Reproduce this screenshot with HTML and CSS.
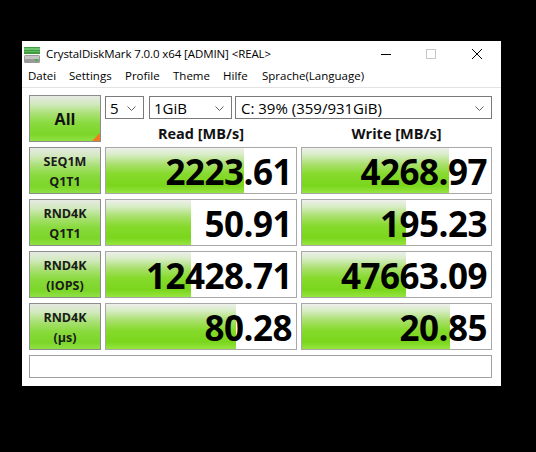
FILE: index.html
```html
<!DOCTYPE html>
<html>
<head>
<meta charset="utf-8">
<link rel="stylesheet" href="styles.css">
</head>
<body>
<div class="window">
  <div class="titlebar">
    <svg class="appicon" width="16" height="16" viewBox="0 0 16 16">
      <rect x="0" y="0" width="16" height="7" fill="#3f9c3f"/>
      <rect x="0" y="1" width="16" height="2" fill="#6cc46c"/>
      <rect x="0" y="4" width="16" height="1" fill="#5cb85c"/>
      <rect x="0" y="8" width="16" height="8" rx="1.5" fill="#9a9a9a"/>
      <rect x="1" y="9" width="14" height="3" fill="#c4c4c4"/>
      <rect x="11" y="12" width="3" height="2" fill="#4caf50"/>
    </svg>
    <span class="title">CrystalDiskMark 7.0.0 x64 [ADMIN] &lt;REAL&gt;</span>
    <div class="controls">
      <span class="ctl min"><svg width="10" height="10" viewBox="0 0 10 10"><path d="M0 5.5H10" stroke="#000" stroke-width="1"/></svg></span>
      <span class="ctl max"><svg width="10" height="10" viewBox="0 0 10 10"><rect x="0.5" y="0.5" width="9" height="9" fill="none" stroke="#c8c8c8" stroke-width="1"/></svg></span>
      <span class="ctl close"><svg width="10" height="10" viewBox="0 0 10 10"><path d="M0 0L10 10M10 0L0 10" stroke="#000" stroke-width="1"/></svg></span>
    </div>
  </div>
  <div class="menubar">
    <span class="mi m1">Datei</span>
    <span class="mi m2">Settings</span>
    <span class="mi m3">Profile</span>
    <span class="mi m4">Theme</span>
    <span class="mi m5">Hilfe</span>
    <span class="mi m6">Sprache(Language)</span>
  </div>
  <div class="content">
    <div class="btn all">All<span class="corner"></span></div>
    <div class="topright">
      <div class="combos">
        <div class="combo c1"><span>5</span><svg class="chev" width="9" height="5" viewBox="0 0 9 5"><path d="M0.5 0.5L4.5 4.5L8.5 0.5" fill="none" stroke="#606060"/></svg></div>
        <div class="combo c2"><span>1GiB</span><svg class="chev" width="9" height="5" viewBox="0 0 9 5"><path d="M0.5 0.5L4.5 4.5L8.5 0.5" fill="none" stroke="#606060"/></svg></div>
        <div class="combo c3"><span>C: 39% (359/931GiB)</span><svg class="chev" width="9" height="5" viewBox="0 0 9 5"><path d="M0.5 0.5L4.5 4.5L8.5 0.5" fill="none" stroke="#606060"/></svg></div>
      </div>
      <div class="heads">
        <div class="head">Read [MB/s]</div>
        <div class="head">Write [MB/s]</div>
      </div>
    </div>

    <div class="btn label"><span>SEQ1M</span><span>Q1T1</span></div>
    <div class="val"><div class="bar" style="width:138px"></div><span class="num">2223.61</span></div>
    <div class="val"><div class="bar" style="width:147px"></div><span class="num">4268.97</span></div>

    <div class="btn label"><span>RND4K</span><span>Q1T1</span></div>
    <div class="val"><div class="bar" style="width:85px"></div><span class="num">50.91</span></div>
    <div class="val"><div class="bar" style="width:104px"></div><span class="num">195.23</span></div>

    <div class="btn label"><span>RND4K</span><span>(IOPS)</span></div>
    <div class="val"><div class="bar" style="width:85px"></div><span class="num">12428.71</span></div>
    <div class="val"><div class="bar" style="width:104px"></div><span class="num">47663.09</span></div>

    <div class="btn label"><span>RND4K</span><span>(µs)</span></div>
    <div class="val"><div class="bar" style="width:130px"></div><span class="num">80.28</span></div>
    <div class="val"><div class="bar" style="width:148px"></div><span class="num">20.85</span></div>

    <div class="status"></div>
  </div>
</div>
</body>
</html>
```
FILE: styles.css
```css
html, body {
  margin: 0;
  padding: 0;
  background: #000;
}
body {
  width: 536px;
  height: 452px;
  overflow: hidden;
  font-family: "Open Sans", "Noto Sans", sans-serif;
}
.window {
  margin-left: 22px;
  margin-top: 41px;
  width: 479px;
  height: 345px;
  background: #fff;
  box-sizing: border-box;
}
.titlebar {
  height: 25px;
  display: flex;
  align-items: center;
  position: relative;
}
.appicon {
  margin-left: 2px;
  margin-top: 2px;
}
.title {
  margin-left: 6px;
  font-size: 11.5px;
  color: #000;
  letter-spacing: -0.1px;
}
.controls {
  margin-left: auto;
  display: flex;
  height: 25px;
}
.ctl {
  width: 46px;
  display: flex;
  align-items: center;
  justify-content: center;
}
.ctl.min { width: 44px; margin-right: 0; }
.ctl.max { width: 46px; }
.ctl.close { width: 46px; margin-right: 1px; }
.menubar {
  height: 21px;
  border-bottom: 1px solid #e3e3e3;
  display: flex;
  align-items: center;
  font-size: 11.5px;
  color: #000;
  position: relative;
}
.mi { position: absolute; top: 2px; }
.m1 { left: 6px; }
.m2 { left: 47px; }
.m3 { left: 103px; }
.m4 { left: 151px; }
.m5 { left: 201px; }
.m6 { left: 240px; }
.content {
  padding: 7px 9px 0 7px;
  display: grid;
  grid-template-columns: 72px 192px 191px;
  grid-template-rows: 47px 47px 47px 47px 47px 23px;
  column-gap: 4px;
  row-gap: 5px;
}
.btn {
  box-sizing: border-box;
  border: 1px solid #8c8c8c;
  background: linear-gradient(#e6e9e2 0%, #d2e9bf 18%, #a8e072 40%, #88da3c 62%, #7cd628 85%, #90e046 100%);
  display: flex;
  flex-direction: column;
  align-items: center;
  justify-content: center;
  font-weight: 700;
  color: #111;
}
.all {
  font-size: 16px;
  position: relative;
  padding-top: 1px;
}
.corner {
  position: absolute;
  right: 0;
  bottom: 0;
  width: 0;
  height: 0;
  border-left: 8px solid transparent;
  border-bottom: 8px solid #f07a1e;
}
.label {
  font-size: 12.5px;
  line-height: 20px;
  padding-top: 2px;
  color: #1a1a1a;
}
.topright {
  grid-column: 2 / 4;
  display: flex;
  flex-direction: column;
}
.combos {
  display: flex;
  margin-top: 1px;
  height: 23px;
}
.combo {
  box-sizing: border-box;
  height: 23px;
  border: 1px solid #7a7a7a;
  background: #fff;
  display: flex;
  align-items: center;
  font-size: 15px;
  color: #000;
  padding-left: 4px;
  padding-right: 7px;
}
.combo span { flex: 1; }
.chev { margin-top: 1px; }
.c1 { width: 39px; }
.c2 { width: 83px; margin-left: 5px; }
.c3 { width: 257px; margin-left: 3px; padding-left: 5px; }
.heads {
  display: flex;
  column-gap: 4px;
  flex: 1;
}
.head {
  text-align: center;
  font-size: 14.5px;
  font-weight: 700;
  color: #111;
  line-height: 22px;
  padding-top: 4px;
}
.head:first-child { width: 192px; }
.head:last-child { width: 191px; }
.val {
  box-sizing: border-box;
  border: 1px solid #a8a8a8;
  background: #fff;
  position: relative;
  display: flex;
  align-items: center;
  justify-content: flex-end;
  overflow: hidden;
}
.bar {
  position: absolute;
  left: 0;
  top: 0;
  bottom: 0;
  background: linear-gradient(#eef0eb 0%, #d9edc8 14%, #aae06e 36%, #86da2c 58%, #7ad61c 84%, #96e440 100%);
}
.num {
  position: relative;
  font-size: 35px;
  font-weight: 700;
  color: #000;
  padding-right: 4px;
  letter-spacing: -0.5px;
  line-height: 45px;
  margin-top: 1px;
}
.status {
  grid-column: 1 / 4;
  box-sizing: border-box;
  border: 1px solid #a0a0a0;
  background: #fff;
}
```
